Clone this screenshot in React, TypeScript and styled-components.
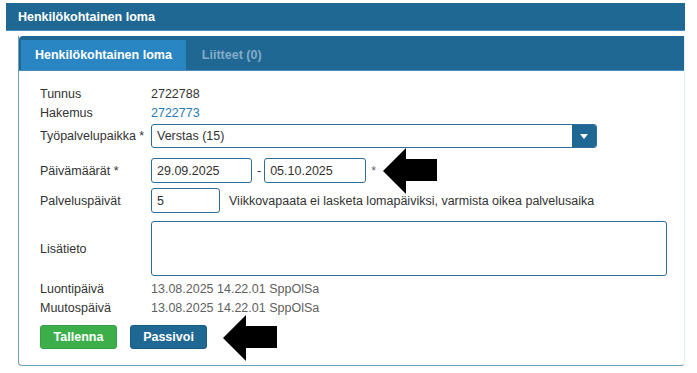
import React from 'react';
import styled, { createGlobalStyle } from 'styled-components';

const GlobalStyle = createGlobalStyle`
  body {
    margin: 0;
    background: #ffffff;
    font-family: "Liberation Sans", Arial, sans-serif;
    font-size: 12.5px;
    color: #333333;
  }
`;

const Page = styled.div`
  width: 697px;
  height: 373px;
  padding: 3px 12px 0 6px;
  box-sizing: border-box;
`;

const TopBar = styled.div`
  height: 27px;
  display: flex;
  align-items: center;
  padding-left: 12px;
  background: #1f6894;
  border-bottom: 1px solid #4d8cb8;
  color: #ffffff;
  font-weight: bold;
  font-size: 12.5px;
`;

const Panel = styled.div`
  margin: 5px 0 0 12px;
  height: 330px;
  border: 1px solid #6f9dbd;
  border-top: none;
  border-right-color: #e4eef5;
  border-radius: 0 0 4px 4px;
  box-sizing: border-box;
`;

const TabStrip = styled.div`
  height: 35px;
  display: flex;
  align-items: flex-end;
  padding-left: 2px;
  background: #1f6894;
  border-bottom: 1px solid #4d8cb8;
  border-radius: 4px 0 0 0;
  box-sizing: border-box;
`;

const Tab = styled.div<{ $active?: boolean }>`
  height: 30px;
  display: flex;
  align-items: center;
  padding: 0 ${(p) => (p.$active ? '14px' : '16px')};
  background: ${(p) => (p.$active ? '#2a86c2' : 'transparent')};
  color: ${(p) => (p.$active ? '#ffffff' : '#84abc8')};
  font-weight: bold;
  font-size: 12.5px;
`;

const Body = styled.div`
  padding: 13px 0 0 21px;
`;

const Row = styled.div<{ $mt?: number; $h?: number }>`
  display: flex;
  align-items: center;
  margin-top: ${(p) => p.$mt || 0}px;
  height: ${(p) => p.$h || 19}px;
`;

const Label = styled.div`
  width: 111px;
  flex-shrink: 0;
  color: #333333;
`;

const Value = styled.div<{ $muted?: boolean }>`
  color: ${(p) => (p.$muted ? '#616161' : '#333333')};
`;

const Link = styled.a`
  color: #2a7ab2;
  text-decoration: none;
`;

const Select = styled.div`
  width: 446px;
  height: 24px;
  display: flex;
  align-items: center;
  border: 1px solid #2d6d97;
  border-radius: 3px;
  box-sizing: border-box;
  overflow: hidden;
`;

const SelectText = styled.div`
  flex: 1;
  padding-left: 5px;
`;

const SelectButton = styled.div`
  width: 24px;
  height: 100%;
  display: flex;
  align-items: center;
  justify-content: center;
  background: #1f6894;
`;

const Caret = styled.div`
  width: 0;
  height: 0;
  border-left: 4px solid transparent;
  border-right: 4px solid transparent;
  border-top: 5px solid #ffffff;
`;

const Input = styled.div<{ $w: number }>`
  width: ${(p) => p.$w}px;
  height: 25px;
  display: flex;
  align-items: center;
  padding-left: 5px;
  border: 1px solid #2d6d97;
  border-radius: 3px;
  box-sizing: border-box;
  color: #333333;
`;

const Dash = styled.span`
  margin: 0 3px 0 5px;
`;

const Star = styled.span`
  margin-left: 5px;
  color: #666666;
`;

const Hint = styled.span`
  margin-left: 9px;
  color: #333333;
`;

const TextArea = styled.div`
  width: 516px;
  height: 55px;
  border: 1px solid #2d6d97;
  border-radius: 3px;
  box-sizing: border-box;
`;

const Actions = styled.div`
  display: flex;
  align-items: center;
  gap: 13px;
  margin-top: 8px;
  height: 24px;
`;

const Button = styled.button<{ $variant: 'save' | 'primary' }>`
  width: 77px;
  height: 24px;
  padding: 0;
  border-radius: 3px;
  border: 1px solid ${(p) => (p.$variant === 'save' ? '#35a043' : '#175a82')};
  background: ${(p) => (p.$variant === 'save' ? '#3caf4a' : '#1f6894')};
  color: #ffffff;
  font-family: "Liberation Sans", Arial, sans-serif;
  font-weight: bold;
  font-size: 12.5px;
`;

const Anchor = styled.span`
  position: relative;
  width: 0;
  height: 0;
`;

const ArrowMark = styled.svg<{ $left: number; $top: number }>`
  position: absolute;
  left: ${(p) => p.$left}px;
  top: ${(p) => p.$top}px;
`;

const BlockArrow = ({ left, top }: { left: number; top: number }) => (
  <ArrowMark $left={left} $top={top} width="54" height="46" viewBox="0 0 54 46">
    <polygon
      points="0,23 23,0 23,11 54,11 54,33 23,33 23,46"
      fill="#000000"
    />
  </ArrowMark>
);

export default function App() {
  return (
    <>
      <GlobalStyle />
      <Page>
        <TopBar>Henkilökohtainen loma</TopBar>
        <Panel>
          <TabStrip>
            <Tab $active>Henkilökohtainen loma</Tab>
            <Tab>Liitteet (0)</Tab>
          </TabStrip>
          <Body>
            <Row>
              <Label>Tunnus</Label>
              <Value>2722788</Value>
            </Row>
            <Row>
              <Label>Hakemus</Label>
              <Link href="#">2722773</Link>
            </Row>
            <Row $mt={2} $h={24}>
              <Label>Työpalvelupaikka *</Label>
              <Select>
                <SelectText>Verstas (15)</SelectText>
                <SelectButton>
                  <Caret />
                </SelectButton>
              </Select>
            </Row>
            <Row $mt={10} $h={25}>
              <Label>Päivämäärät *</Label>
              <Input $w={101}>29.09.2025</Input>
              <Dash>-</Dash>
              <Input $w={102}>05.10.2025</Input>
              <Star>*</Star>
              <Anchor>
                <BlockArrow left={7} top={-23} />
              </Anchor>
            </Row>
            <Row $mt={5} $h={25}>
              <Label>Palveluspäivät</Label>
              <Input $w={69}>5</Input>
              <Hint>Viikkovapaata ei lasketa lomapäiviksi, varmista oikea palvelusaika</Hint>
            </Row>
            <Row $mt={8} $h={55}>
              <Label>Lisätieto</Label>
              <TextArea />
            </Row>
            <Row $mt={3}>
              <Label>Luontipäivä</Label>
              <Value $muted>13.08.2025 14.22.01 SppOlSa</Value>
            </Row>
            <Row>
              <Label>Muutospäivä</Label>
              <Value $muted>13.08.2025 14.22.01 SppOlSa</Value>
            </Row>
            <Actions>
              <Button $variant="save">Tallenna</Button>
              <Button $variant="primary">Passivoi</Button>
              <Anchor>
                <BlockArrow left={3} top={-22} />
              </Anchor>
            </Actions>
          </Body>
        </Panel>
      </Page>
    </>
  );
}
